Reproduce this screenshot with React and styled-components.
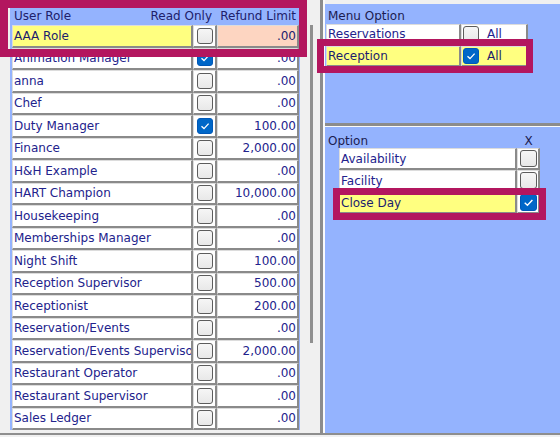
import React from 'react';
import styled, { createGlobalStyle } from 'styled-components';

const Global = createGlobalStyle`
  html, body { margin: 0; padding: 0; }
  body {
    width: 560px; height: 437px; overflow: hidden;
    background: #f0f0f0;
    font-family: "DejaVu Sans", Verdana, sans-serif;
  }
`;

const PANEL_BLUE = '#94b3fe';
const YELLOW = '#ffff80';
const PEACH = '#fdd5c1';

const Screen = styled.div`
  position: relative;
  width: 560px;
  height: 437px;
  display: flex;
  flex-direction: column;
  background: #f0f0f0;
`;

const Main = styled.div`
  display: flex;
  height: 433px;
`;

const BottomRule = styled.div`
  height: 2px;
  background: #8e8e8e;
`;

const LeftWrap = styled.div`
  width: 290px;
  padding: 7px 0 0 10px;
`;

const RolesPanel = styled.div`
  background: ${PANEL_BLUE};
  height: 423px;
  padding-left: 2px;
  display: flex;
  flex-direction: column;
`;

const RoleGrid = styled.div`
  display: grid;
  grid-template-columns: 181px 24px 82px;
  height: ${p => p.$h};
  font-size: 12px;
`;

const HeadCell = styled.div`
  display: flex;
  align-items: center;
  justify-content: ${p => (p.$right ? 'flex-end' : 'flex-start')};
  padding: ${p => p.$pad || '0 0 0 2px'};
  white-space: nowrap;
  color: #20206a;
`;

const Cell = styled.div`
  box-sizing: border-box;
  display: flex;
  align-items: center;
  justify-content: ${p => (p.$align === 'right' ? 'flex-end' : p.$align === 'center' ? 'center' : 'flex-start')};
  padding: ${p => p.$pad || '0 0 0 1px'};
  background: ${p => p.$bg || '#ffffff'};
  border-top: 1px solid #dcdcdc;
  border-left: 1px solid #dcdcdc;
  border-right: 2px solid #8a8a8a;
  border-bottom: 2px solid #8a8a8a;
  color: ${p => (p.$hl ? '#1c1c6e' : '#22228c')};
  white-space: nowrap;
  overflow: hidden;
  gap: 8px;
`;

const Gutter = styled.div`
  width: 20px;
  padding: 25px 0 0 10px;
  box-sizing: border-box;
`;

const ScrollBar = styled.div`
  width: 3px;
  height: 318px;
  background: #8f8f8f;
`;

const Divider = styled.div`
  width: 3px;
  background: #8c8c8c;
  border-right: 2px solid #fafafa;
`;

const RightPanel = styled.div`
  flex: 1;
  display: flex;
  flex-direction: column;
  padding-top: 4px;
`;

const MenuSection = styled.div`
  background: ${PANEL_BLUE};
  height: 119px;
  padding-left: 1px;
`;

const SectionTitle = styled.div`
  height: 20px;
  display: flex;
  align-items: flex-end;
  padding: 0 0 1px 2px;
  box-sizing: border-box;
  font-size: 12px;
  line-height: 14px;
  color: #1c1c50;
`;

const MenuGrid = styled.div`
  display: grid;
  grid-template-columns: 135px 67px;
  height: 21.5px;
  font-size: 12px;
`;

const HSeparator = styled.div`
  height: 3px;
  background: #8c8c8c;
  border-bottom: 1px solid #fafafa;
`;

const OptionSection = styled.div`
  flex: 1;
  background: ${PANEL_BLUE};
`;

const OptionGrid = styled.div`
  display: grid;
  grid-template-columns: 14px 178px 23px;
  height: ${p => p.$h};
  font-size: 12px;
  line-height: 14px;
`;

const OptionTitle = styled.div`
  grid-column: 1 / 3;
  display: flex;
  align-items: flex-end;
  padding: 0 0 0 3px;
  color: #1c1c50;
`;

const XTitle = styled.div`
  display: flex;
  align-items: flex-end;
  justify-content: center;
  color: #1c1c50;
`;

const Box = styled.span`
  box-sizing: border-box;
  flex: none;
  width: ${p => p.$size}px;
  height: ${p => p.$size}px;
  border-radius: 3px;
  border: 1px solid ${p => (p.$on ? '#0058b8' : '#5c5c5c')};
  background: ${p => (p.$on ? '#0067c8' : 'linear-gradient(#f6f6f6, #e8e8e8)')};
  display: flex;
  align-items: center;
  justify-content: center;
`;

const Annotation = styled.div`
  position: absolute;
  box-sizing: border-box;
  border: ${p => p.$w}px solid #b3165f;
  pointer-events: none;
`;

function Check({ on, size = 16 }) {
  return (
    <Box $on={on} $size={size}>
      {on && (
        <svg width={size - 4} height={size - 4} viewBox="0 0 12 12">
          <path d="M2.5 6.3 L5 8.6 L9.6 3.6" fill="none" stroke="#ffffff" strokeWidth="1.3" />
        </svg>
      )}
    </Box>
  );
}

const roles = [
  ['AAA Role', false, '.00', true],
  ['Animation Manager', true, '.00'],
  ['anna', false, '.00'],
  ['Chef', false, '.00'],
  ['Duty Manager', true, '100.00'],
  ['Finance', false, '2,000.00'],
  ['H&H Example', false, '.00'],
  ['HART Champion', false, '10,000.00'],
  ['Housekeeping', false, '.00'],
  ['Memberships Manager', false, '.00'],
  ['Night Shift', false, '100.00'],
  ['Reception Supervisor', false, '500.00'],
  ['Receptionist', false, '200.00'],
  ['Reservation/Events', false, '.00'],
  ['Reservation/Events Supervisor', false, '2,000.00'],
  ['Restaurant Operator', false, '.00'],
  ['Restaurant Supervisor', false, '.00'],
  ['Sales Ledger', false, '.00'],
];

const menus = [
  ['Reservations', false, false],
  ['Reception', true, true],
];

const options = [
  ['Availability', false, false],
  ['Facility', false, false],
  ['Close Day', true, true],
];

export default function App() {
  return (
    <>
      <Global />
      <Screen>
        <Main>
          <LeftWrap>
            <RolesPanel>
              <RoleGrid $h="18px">
                <HeadCell>User Role</HeadCell>
                <HeadCell $right $pad="0 5px 0 0">Read Only</HeadCell>
                <HeadCell $right $pad="0 3px 0 0">Refund Limit</HeadCell>
              </RoleGrid>
              {roles.map(([name, ro, limit, sel]) => (
                <RoleGrid key={name} $h="22.5px">
                  <Cell $bg={sel ? YELLOW : undefined} $hl={sel}>{name}</Cell>
                  <Cell $align="center" $pad="0">
                    <Check on={ro} />
                  </Cell>
                  <Cell $align="right" $pad="0 1px 0 0" $bg={sel ? PEACH : undefined} $hl={sel}>
                    {limit}
                  </Cell>
                </RoleGrid>
              ))}
            </RolesPanel>
          </LeftWrap>
          <Gutter>
            <ScrollBar />
          </Gutter>
          <Divider />
          <RightPanel>
            <MenuSection>
              <SectionTitle>Menu Option</SectionTitle>
              {menus.map(([name, on, sel]) => (
                <MenuGrid key={name}>
                  <Cell $bg={sel ? YELLOW : undefined} $hl={sel}>{name}</Cell>
                  <Cell $pad="0 0 0 1px" $bg={sel ? YELLOW : undefined} $hl={sel}>
                    <Check on={on} />
                    <span>All</span>
                  </Cell>
                </MenuGrid>
              ))}
            </MenuSection>
            <HSeparator />
            <OptionSection>
              <OptionGrid $h="21px">
                <OptionTitle>Option</OptionTitle>
                <XTitle>X</XTitle>
              </OptionGrid>
              {options.map(([name, on, sel]) => (
                <OptionGrid key={name} $h="22px">
                  <span />
                  <Cell $bg={sel ? YELLOW : undefined} $hl={sel}>{name}</Cell>
                  <Cell $align="center" $pad="0">
                    <Check on={on} size={17} />
                  </Cell>
                </OptionGrid>
              ))}
            </OptionSection>
          </RightPanel>
        </Main>
        <BottomRule />
        <Annotation $w={8} style={{ left: 0, top: 0, width: 307, height: 57 }} />
        <Annotation $w={7} style={{ left: 317, top: 39, width: 216, height: 34 }} />
        <Annotation $w={7} style={{ left: 333, top: 188, width: 213, height: 32 }} />
      </Screen>
    </>
  );
}
